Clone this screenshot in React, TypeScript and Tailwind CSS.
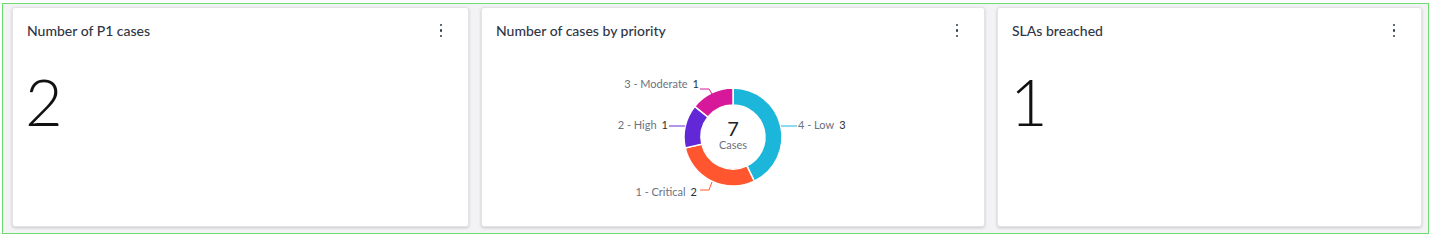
import { ReactNode } from 'react';

type Slice = { label: string; value: number; color: string };

const slices: Slice[] = [
  { label: '4 - Low', value: 3, color: '#1bb6d9' },
  { label: '1 - Critical', value: 2, color: '#ff5630' },
  { label: '2 - High', value: 1, color: '#6228d7' },
  { label: '3 - Moderate', value: 1, color: '#d8189b' },
];

const CX = 251;
const CY = 87;
const R_OUT = 49;
const R_IN = 32;

function pt(r: number, deg: number) {
  const a = (deg * Math.PI) / 180;
  return [CX + r * Math.sin(a), CY - r * Math.cos(a)];
}

function arc(start: number, end: number) {
  const [x1, y1] = pt(R_OUT, start);
  const [x2, y2] = pt(R_OUT, end);
  const [x3, y3] = pt(R_IN, end);
  const [x4, y4] = pt(R_IN, start);
  const large = end - start > 180 ? 1 : 0;
  return `M${x1} ${y1} A${R_OUT} ${R_OUT} 0 ${large} 1 ${x2} ${y2} L${x3} ${y3} A${R_IN} ${R_IN} 0 ${large} 0 ${x4} ${y4} Z`;
}

function Kebab() {
  return (
    <div className="flex flex-col items-center gap-[3px] pt-[1px]">
      <span className="block w-[2.5px] h-[2.5px] rounded-full bg-[#2e3a4d]" />
      <span className="block w-[2.5px] h-[2.5px] rounded-full bg-[#2e3a4d]" />
      <span className="block w-[2.5px] h-[2.5px] rounded-full bg-[#2e3a4d]" />
    </div>
  );
}

function Card({ title, width, children }: { title: string; width: string; children: ReactNode }) {
  return (
    <div className={`${width} h-[220px] shrink-0 bg-white rounded-[3px] border border-[#e3e4e8] shadow-[0_1px_3px_rgba(0,0,0,0.18)] flex flex-col`}>
      <div className="flex items-center justify-between pl-[14px] pr-[26px] pt-[2px] h-[42px]">
        <h2 className="text-[14px] text-[#2f3645] font-medium">{title}</h2>
        <Kebab />
      </div>
      {children}
    </div>
  );
}

function BigNumber({ value }: { value: string }) {
  return (
    <div className="pl-[12px] pt-[19px] text-[65px] leading-none font-light text-[#111]">{value}</div>
  );
}

function Donut() {
  const total = slices.reduce((a, s) => a + s.value, 0);
  let acc = 0;
  const arcs = slices.map((s) => {
    const start = (acc / total) * 360;
    acc += s.value;
    const end = (acc / total) * 360;
    return { ...s, start, end };
  });

  const labelCls = 'fill-[#6b7280]';
  const numCls = 'fill-[#2b2f36]';

  return (
    <svg width="502" height="170" className="block">
      {arcs.map((a) => (
        <path key={a.label} d={arc(a.start, a.end)} fill={a.color} stroke="#fff" strokeWidth="1.5" />
      ))}

      {/* leader lines */}
      <polyline points="218,39 227,39 230,44" fill="none" stroke="#d8189b" strokeWidth="1" />
      <polyline points="187,76 203,76" fill="none" stroke="#6228d7" strokeWidth="1" />
      <polyline points="299,76 315,76" fill="none" stroke="#1bb6d9" strokeWidth="1" />
      <polyline points="230,132 227,140 218,140" fill="none" stroke="#ff5630" strokeWidth="1" />

      <g fontSize="11" style={{ fontFamily: 'Lato, "Open Sans", sans-serif' }}>
        <text x="217" y="35" textAnchor="end" dominantBaseline="middle">
          <tspan className={labelCls}>3 - Moderate</tspan>
          <tspan className={numCls} dx="5">1</tspan>
        </text>
        <text x="186" y="76" textAnchor="end" dominantBaseline="middle">
          <tspan className={labelCls}>2 - High</tspan>
          <tspan className={numCls} dx="5">1</tspan>
        </text>
        <text x="316" y="76" dominantBaseline="middle">
          <tspan className={labelCls}>4 - Low</tspan>
          <tspan className={numCls} dx="5">3</tspan>
        </text>
        <text x="215" y="143" textAnchor="end" dominantBaseline="middle">
          <tspan className={labelCls}>1 - Critical</tspan>
          <tspan className={numCls} dx="5">2</tspan>
        </text>
        <text x={CX} y={CY - 6} textAnchor="middle" dominantBaseline="middle" fontSize="20" className="fill-[#222]">
          {total}
        </text>
        <text x={CX} y={CY + 9} textAnchor="middle" dominantBaseline="middle" fontSize="11" className="fill-[#6b7280]">
          Cases
        </text>
      </g>
    </svg>
  );
}

export default function App() {
  return (
    <div className="w-[1436px] h-[238px] bg-white pt-[3px] pl-[2px]" style={{ fontFamily: 'Lato, "Open Sans", sans-serif' }}>
      <div className="w-[1427px] h-[231px] border border-[#6fdc6f] bg-[#f3f3f5] flex gap-[12px] pl-[9px] pt-[3px]">
        <Card title="Number of P1 cases" width="w-[457px]">
          <BigNumber value="2" />
        </Card>
        <Card title="Number of cases by priority" width="w-[504px]">
          <Donut />
        </Card>
        <Card title="SLAs breached" width="w-[425px]">
          <BigNumber value="1" />
        </Card>
      </div>
    </div>
  );
}
